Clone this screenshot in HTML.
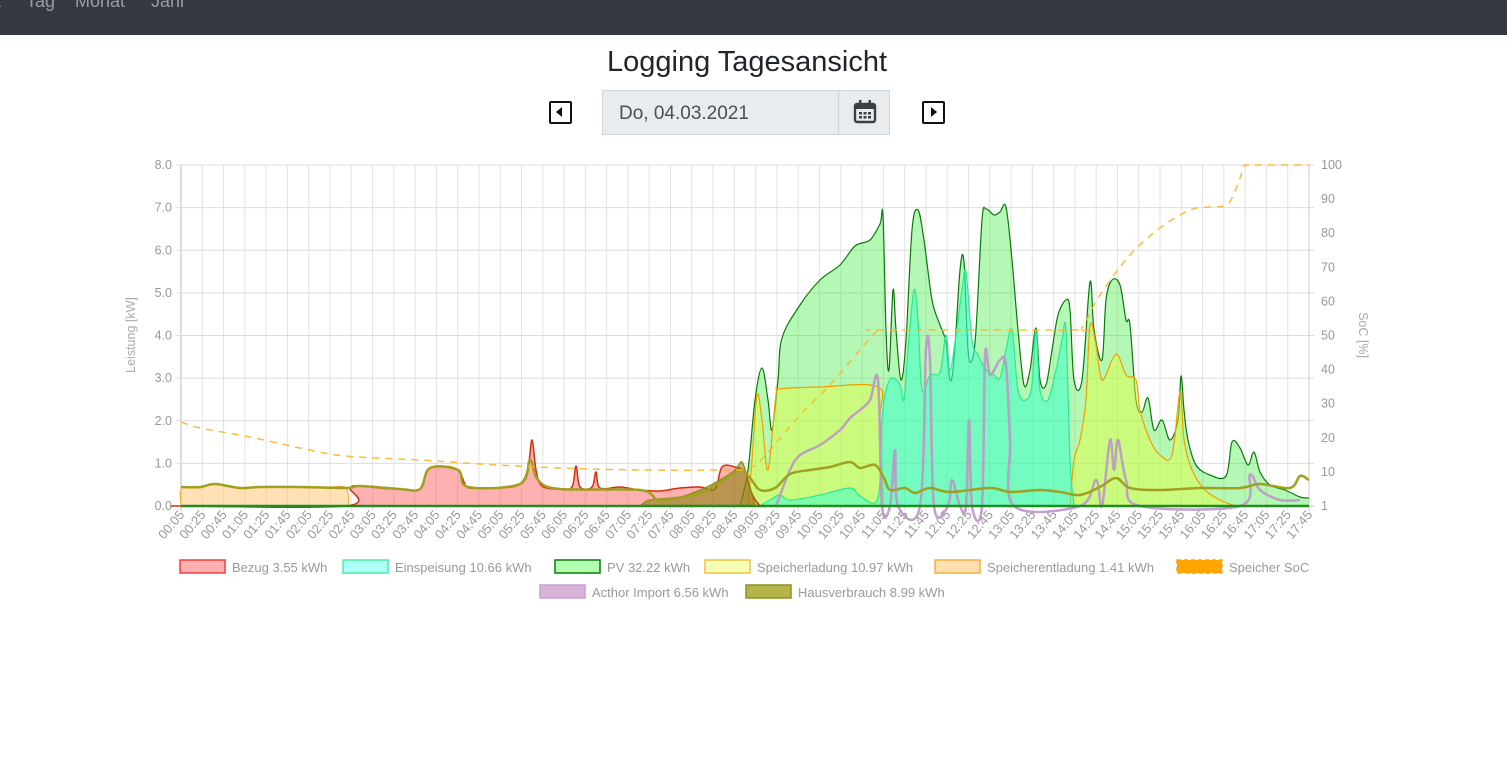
<!DOCTYPE html>
<html><head><meta charset="utf-8"><style>
body{margin:0;width:1507px;height:758px;background:#fff;font-family:"Liberation Sans",sans-serif;overflow:hidden;position:relative}
.nav{position:absolute;left:0;top:0;width:1507px;height:35px;background:#343a40}
.nav span{position:absolute;top:-9px;color:#9a9da0;font-size:18px}
h1{position:absolute;top:46px;left:0;width:1494px;text-align:center;margin:0;font-weight:normal;font-size:29px;color:#212529}
.date{position:absolute;left:602px;top:90px;width:288px;height:45px;background:#e9ecef;border:1px solid #ced4da;box-sizing:border-box}
.date .t{position:absolute;left:16px;top:12px;font-size:19px;color:#495057}
.date .b{position:absolute;left:235px;top:0;width:52px;height:43px;border-left:1px solid #ced4da}
.arr{position:absolute;top:101px;width:23px;height:23px;border:2.5px solid #111;box-sizing:border-box;border-radius:2px}
</style></head><body>
<div class="nav"><span style="left:-4px">t</span><span style="left:26px">Tag</span><span style="left:75px">Monat</span><span style="left:151px">Jahr</span></div>
<h1>Logging Tagesansicht</h1>
<div class="arr" style="left:549px"><svg width="18" height="18" style="position:absolute;left:0;top:0"><polygon points="11,4 11,14 5,9" fill="#111"/></svg></div>
<div class="date"><div class="t">Do, 04.03.2021</div><div class="b"><svg width="52" height="43"><rect x="16" y="13" width="20" height="18" rx="2" fill="none" stroke="#3a3f44" stroke-width="2.4"/><rect x="16" y="13" width="20" height="5" fill="#3a3f44"/><rect x="20" y="9" width="2.5" height="6" fill="#3a3f44"/><rect x="29.5" y="9" width="2.5" height="6" fill="#3a3f44"/><g fill="#3a3f44"><rect x="20" y="21" width="3" height="2.5"/><rect x="24.5" y="21" width="3" height="2.5"/><rect x="29" y="21" width="3" height="2.5"/><rect x="20" y="25" width="3" height="2.5"/><rect x="24.5" y="25" width="3" height="2.5"/><rect x="29" y="25" width="3" height="2.5"/></g></svg></div></div>
<div class="arr" style="left:922px"><svg width="18" height="18" style="position:absolute;left:0;top:0"><polygon points="7,4 7,14 13,9" fill="#111"/></svg></div>
<svg id="c" width="1507" height="758" style="position:absolute;left:0;top:0" font-family="Liberation Sans, sans-serif"></svg>
<script>
var s=document.getElementById('c'),h='';
var X0=181,X1=1309,Y0=506,Y8=165;
for(var i=0;i<=53;i++){var x=X0+i*(X1-X0)/53;h+='<line x1="'+x+'" y1="165" x2="'+x+'" y2="511" stroke="'+(i==0?'#bbb':'#e2e2e2')+'"/>';
var m=5+i*20,hh=Math.floor(m/60),mm=m%60;var lab=(hh<10?'0':'')+hh+':'+(mm<10?'0':'')+mm;
h+='<text transform="translate('+(x+4)+',515) rotate(-50)" text-anchor="end" font-size="13" fill="#999">'+lab+'</text>';}
for(var k=0;k<=8;k++){var y=Y0-k*(Y0-Y8)/8;h+='<line x1="176" y1="'+y+'" x2="1314" y2="'+y+'" stroke="'+(k==0?'#bbb':'#ddd')+'"/><text x="172" y="'+(y+4)+'" text-anchor="end" font-size="12.5" fill="#999">'+k+'.0</text>';}
var soc=['1','10','20','30','40','50','60','70','80','90','100'];
for(var k=0;k<=10;k++){var y=506-k*34.1;h+='<text x="1321" y="'+(y+4)+'" font-size="12.5" fill="#999">'+soc[k]+'</text>';}
h+='<line x1="1309" y1="165" x2="1309" y2="511" stroke="#ccc"/>';
h+='<text transform="translate(135,335) rotate(-90)" text-anchor="middle" font-size="12.5" fill="#aaa">Leistung [kW]</text>';
h+='<text transform="translate(1359,335) rotate(90)" text-anchor="middle" font-size="12.5" fill="#aaa">SoC [%]</text>';
function sm(p){var d='M'+p[0][0]+','+p[0][1];for(var i=0;i<p.length-1;i++){var a=p[i-1]||p[i],b=p[i],c=p[i+1],e=p[i+2]||c;
d+=' C'+(b[0]+(c[0]-a[0])/6)+','+(b[1]+(c[1]-a[1])/6)+' '+(c[0]-(e[0]-b[0])/6)+','+(c[1]-(e[1]-b[1])/6)+' '+c[0]+','+c[1];}return d;}
function area(p,fill,stroke,w){var d=sm(p);h+='<path d="'+d+' L'+p[p.length-1][0]+',506 L'+p[0][0]+',506Z" fill="'+fill+'" stroke="none"/><path d="'+d+'" fill="none" stroke="'+stroke+'" stroke-width="'+(w||1.2)+'"/>';}
function line(p,stroke,w,da){h+='<path d="'+sm(p)+'" fill="none" stroke="'+stroke+'" stroke-width="'+w+'"'+(da?' stroke-dasharray="'+da+'"':'')+'/>';}
area([[181,506],[182,488],[200,488],[215,484],[240,488],[260,487],[300,487],[330,487],[346,488],[349,506]],'rgba(255,200,120,0.55)','#f0b040');
area([[740,506],[748,470],[755,400],[762,368],[768,400],[772,430],[778,380],[782,338],[800,305],[820,280],[840,265],[855,246],[870,240],[880,224],[883,216],[886,330],[889,370],[893,290],[896,330],[901,380],[906,340],[912,230],[918,210],[924,240],[932,300],[940,325],[946,342],[950,380],[954,360],[960,270],[964,262],[968,350],[972,360],[976,330],[982,220],[986,209],[994,215],[1000,212],[1006,207],[1012,260],[1018,330],[1024,385],[1030,370],[1036,328],[1040,380],[1046,385],[1052,350],[1058,315],[1066,300],[1070,310],[1074,380],[1082,380],[1090,282],[1094,330],[1102,360],[1106,300],[1112,280],[1120,285],[1126,320],[1130,325],[1136,400],[1142,412],[1148,398],[1154,430],[1162,420],[1170,440],[1178,420],[1181,376],[1184,410],[1188,440],[1196,465],[1210,475],[1226,476],[1232,442],[1240,448],[1248,465],[1254,452],[1260,472],[1270,485],[1285,490],[1300,497],[1309,498]],'rgba(60,235,60,0.38)','#0a7a0a');
area([[748,506],[752,460],[757,395],[762,420],[768,470],[776,395],[780,389],[820,387],[878,387],[880,420],[883,506]],'rgba(230,255,60,0.45)','#f0a000');
area([[1070,506],[1074,460],[1080,440],[1086,400],[1090,325],[1096,345],[1102,380],[1112,360],[1118,355],[1126,375],[1136,380],[1140,410],[1150,440],[1160,455],[1172,455],[1180,392],[1184,440],[1192,470],[1205,490],[1220,500],[1235,506]],'rgba(230,255,60,0.45)','#f0a000');
area([[760,506],[770,500],[780,495],[790,500],[820,495],[850,488],[860,496],[878,498],[882,420],[886,390],[892,378],[900,385],[904,400],[908,350],[914,290],[918,320],[922,390],[930,375],[940,372],[946,335],[950,370],[956,335],[962,290],[966,272],[972,340],[978,355],[986,370],[994,375],[1000,378],[1006,350],[1012,330],[1018,390],[1026,400],[1032,385],[1036,330],[1040,390],[1048,400],[1056,370],[1062,340],[1066,330],[1070,460],[1074,506]],'rgba(60,255,200,0.55)','#2ce890');
area([[181,506],[184,506],[346,506],[350,488],[360,486],[380,488],[400,489],[420,489],[428,470],[440,466],[458,470],[466,486],[474,488],[500,488],[520,484],[528,468],[532,440],[536,470],[542,486],[560,489],[572,487],[576,466],[580,487],[592,487],[596,472],[600,488],[620,487],[640,490],[660,491],[680,488],[700,487],[715,489],[722,467],[735,467],[745,472],[750,488],[754,498],[760,506]],'rgba(255,80,80,0.45)','#d03010',1.5);
area([[640,506],[650,500],[680,497],[700,490],[720,480],[735,470],[742,462],[748,480],[755,506]],'rgba(128,128,0,0.55)','#8a8a10');
line([[776,506],[790,470],[800,455],[820,445],[840,430],[850,418],[860,410],[870,400],[878,380],[882,506],[890,506],[895,450],[898,506],[920,506],[926,350],[930,360],[934,506],[948,506],[952,480],[960,506],[966,506],[969,420],[972,506],[982,506],[985,355],[990,375],[1000,360],[1006,365],[1010,440],[1014,506],[1080,506],[1096,480],[1102,506],[1110,440],[1114,470],[1118,440],[1126,480],[1140,506],[1240,506],[1250,475],[1260,490],[1280,500],[1300,500]],'rgba(190,150,200,0.9)',2.5);
line([[181,487],[200,487],[215,484],[240,488],[260,487],[300,487],[346,488],[360,486],[400,489],[420,489],[430,468],[458,470],[468,487],[520,484],[530,460],[538,480],[560,489],[640,490],[660,500],[700,493],[720,482],[740,470],[750,478],[760,490],[775,488],[790,474],[810,470],[830,467],[850,462],[860,468],[875,465],[884,478],[890,490],[905,488],[915,493],[930,488],[950,492],[990,488],[1010,492],[1040,490],[1060,492],[1080,495],[1100,487],[1116,478],[1130,488],[1160,490],[1200,488],[1240,488],[1260,484],[1290,488],[1300,476],[1309,480]],'#a0a020',2.5);
line([[181,506],[1309,506]],'#228b22',2.5);
line([[181,422],[200,428],[250,437],[300,448],[345,456],[420,460],[480,464],[560,468],[640,470],[720,470],[750,468],[770,450],[800,415],[830,385],[860,350],[876,332],[882,330],[1075,330],[1082,328],[1100,295],[1130,255],[1160,228],[1190,210],[1210,207],[1225,206],[1232,198],[1240,178],[1244,166],[1248,165],[1270,165],[1309,165]],'rgba(255,180,40,0.9)',1.5,'7,6');
function lg(x,y,fill,st,t,dash){h+='<rect x="'+x+'" y="'+(y-7)+'" width="45" height="13" fill="'+fill+'" stroke="'+st+'" stroke-width="1.5"'+(dash?' stroke-dasharray="4,3"':'')+'/><text x="'+(x+52)+'" y="'+(y+5)+'" font-size="13" fill="#999">'+t+'</text>';}
lg(180,567,'rgba(255,80,80,0.45)','#f04040','Bezug 3.55 kWh');
lg(343,567,'#adfff8','#4deea0','Einspeisung 10.66 kWh');
lg(555,567,'#b3ffb0','#0a7a0a','PV 32.22 kWh');
lg(705,567,'#f2ffb5','#f0c040','Speicherladung 10.97 kWh');
lg(935,567,'#ffdfae','#f0b040','Speicherentladung 1.41 kWh');
lg(1177,567,'#ffa500','#ffa500','Speicher SoC',1);
lg(540,592,'#d8b4d8','#cca0cc','Acthor Import 6.56 kWh');
lg(746,592,'#b4b44a','#909020','Hausverbrauch 8.99 kWh');
s.innerHTML=h;
</script>
</body></html>
